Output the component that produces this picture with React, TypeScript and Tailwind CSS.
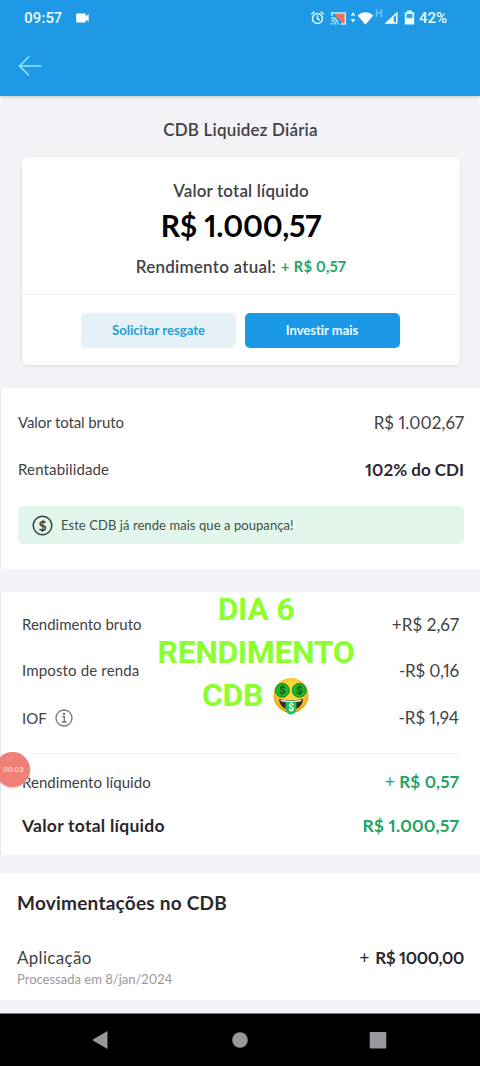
import React from "react";

function StatusIcons() {
  return (
    <svg width="110" height="20" viewBox="0 0 110 20" fill="none" className="block">
      {/* alarm */}
      <g stroke="#d9fbff" strokeWidth="1.5">
        <circle cx="7.5" cy="10.5" r="5" />
        <path d="M7.5 7.3v3.4l2.3 1.5M1.3 6.3l3-2.6M13.7 6.3l-3-2.6" />
      </g>
      {/* cast */}
      <path d="M25.5 6H35v9.5h-3.8c0-3.4-2.5-5.8-5.9-6z" fill="#f0705c" />
      <g stroke="#b9f3ff" strokeWidth="1.4">
        <path d="M21.7 8V5h13.6v11h-4.6" />
        <path d="M21.3 9.7c3.7 0 6.7 2.8 6.7 6.7M21.3 12.4c2.2 0 4 1.7 4 4" />
      </g>
      <circle cx="21.9" cy="15.7" r="1" fill="#b9f3ff" />
      {/* traffic arrows */}
      <path d="M43 4l2.3 3.8h-4.6zM43 14.8l2.3-3.8h-4.6z" fill="#d9fbff" />
      {/* wifi */}
      <path d="M47.7 7.5C50 5.2 52.7 4.2 55.4 4.2s5.5 1 7.8 3.3l-7.8 9.3z" fill="#fff" />
      {/* signal */}
      <path d="M74.5 15.7L87.5 3.5v12.2z" fill="#fff" />
      <path d="M83.7 9l2.3-2.1v7.3h-2.3z" fill="#1f98e4" />
      {/* battery */}
      <path d="M97 2.5h5v1.7h2.2v12.3h-9.400V4.200H97z" fill="#e9fdff" />
      <path d="M96.500 5.900h6v4.300h-6z" fill="#3aa7ea" />
    </svg>
  );
}

function MoneyFace() {
  return (
    <svg width="38" height="38" viewBox="0 0 38 38" className="block">
      <defs>
        <radialGradient id="face" cx="50%" cy="40%" r="58%">
          <stop offset="0.5" stopColor="#fdd835" />
          <stop offset="1" stopColor="#f0a41f" />
        </radialGradient>
      </defs>
      <circle cx="19" cy="18.5" r="17.5" fill="url(#face)" />
      <path d="M7 22q12 2.500 24 0c-.5 7-5.500 10.800-12 10.800S7.500 29 7 22z" fill="#3a2d2b" />
      <path d="M8.500 22.700q10.500 2 21 0l-.5 1.600q-10 2-20 0z" fill="#fff" />
      <path d="M13.600 24.700h10.800v7.300a5.400 5.400 0 0 1-10.800 0z" fill="#19c455" />
      <circle cx="10.300" cy="13.300" r="7" fill="#22b32d" stroke="#128a1e" strokeWidth="1" />
      <circle cx="27.300" cy="13.300" r="7" fill="#22b32d" stroke="#128a1e" strokeWidth="1" />
      <g fontFamily="Roboto, sans-serif" fontWeight="700" textAnchor="middle">
        <text x="10.300" y="17.300" fontSize="11" fill="#0b5715">$</text>
        <text x="27.300" y="17.300" fontSize="11" fill="#0b5715">$</text>
        <text x="19" y="34" fontSize="10" fill="#fff">$</text>
      </g>
    </svg>
  );
}

export default function App() {
  return (
    <div className="relative flex h-[1066px] w-[480px] flex-col overflow-hidden bg-[#f3f2f6] font-['Lato',sans-serif] whitespace-nowrap text-[#424146] proportional-nums [font-variant-ligatures:none]">
      <header className="h-24 shrink-0 bg-[#1f99e6] shadow-[0_1px_3px_#c9c5b8]">
        <div className="flex h-9 items-center pl-6 font-['Roboto',sans-serif] text-[15px] font-medium text-[#e9fdff]">
          <span className="mt-px w-[39px]">09:57</span>
          <svg width="13" height="10" viewBox="0 0 13 10" className="ml-[13px]">
            <path d="M1 .5h8q.8 0 .8.8V3.500L12.700 1v8L9.800 6.500v2.200q0 .8-.8.8H1q-.8 0-.8-.8V1.300Q.2.500 1 .5z" fill="#fff" />
          </svg>
          <div className="relative ml-[221px]">
            <StatusIcons />
            <span className="absolute -top-px left-[65px] text-[11px] leading-[14px] text-[#70cdfb]">H</span>
          </div>
          <span className="-ml-px mt-px">42%</span>
        </div>
        <div className="flex h-[60px] items-center pl-[18px]">
          <svg width="25" height="22" viewBox="0 0 25 22" fill="none" stroke="#8fe9ff" strokeWidth="1.6">
            <path d="M23.500 11H1.800M11 1.500L1.500 11l9.500 9.500" />
          </svg>
        </div>
      </header>

      <h1 className="mt-[22px] h-6 shrink-0 pl-px text-center text-[17px] leading-6 font-semibold tracking-[0.18px]">CDB Liquidez Diária</h1>

      <section className="mt-[15px] mr-5 ml-[22px] flex h-[208px] shrink-0 flex-col rounded-[5px] bg-white shadow-[0_1px_3px_#dddbe1]">
        <div className="flex h-[138px] flex-col items-center border-b border-[#f3f2f5] pt-[22px]">
          <p className="h-6 text-[17px] leading-6 font-semibold tracking-[0.15px]">Valor total líquido</p>
          <p className="h-[46px] text-[30px] leading-[45px] font-bold tracking-[-0.2px] text-black">R$ 1.000,57</p>
          <p className="mt-1.5 flex h-6 items-center text-[17px] font-semibold tracking-[0.23px]">
            Rendimento atual:<span className="ml-[5px] text-[14.5px] font-bold tracking-[0.35px] text-[#21a365]">+ R$ 0,57</span>
          </p>
        </div>
        <div className="mt-[18px] mr-0.5 flex justify-center gap-[9px] text-[13px] font-bold">
          <button className="h-[35px] w-[155px] rounded-[5px] bg-[#e6f1f8] pl-px tracking-[0.05px] text-[#20a3db]">Solicitar resgate</button>
          <button className="h-[35px] w-[155px] rounded-[5px] bg-[#1b99e6] text-[#e9fdff]">Investir mais</button>
        </div>
      </section>

      <section className="mt-[23px] h-[181px] shrink-0 border-l border-[#e6e5e9] bg-white pt-[11px] pr-4 pl-[17px]">
        <div className="flex h-[47px] items-center justify-between">
          <span className="text-[15px] tracking-[-0.1px]">Valor total bruto</span>
          <span className="text-[17px] tracking-[0.08px]">R$ 1.002,67</span>
        </div>
        <div className="flex h-[47px] items-center justify-between">
          <span className="text-[15px] tracking-[0.15px]">Rentabilidade</span>
          <span className="text-[17px] font-bold text-[#2b2a2e]">102% do CDI</span>
        </div>
        <div className="mt-[13px] flex h-[38px] items-center rounded-[5px] bg-[#e3f6ec] text-[13px] text-[#3c5147]">
          <svg width="21" height="21" viewBox="0 0 21 21" className="ml-[14px]">
            <circle cx="10.500" cy="10.500" r="9.300" fill="none" stroke="#33413a" strokeWidth="1.5" />
            <text x="10.500" y="15.500" textAnchor="middle" fontSize="14" fontWeight="700" fill="#33413a">$</text>
          </svg>
          <span className="mt-px ml-2 tracking-[0.07px]">Este CDB já rende mais que a poupança!</span>
        </div>
      </section>

      <section className="relative mt-[23px] h-[263px] shrink-0 border-l border-[#e6e5e9] bg-white pt-[9px] pr-[21px] pl-[21px]">
        <div className="flex h-[46px] items-center justify-between">
          <span className="text-[15px]">Rendimento bruto</span>
          <span className="mt-0.5 text-[17px] tracking-[0.1px]">+R$ 2,67</span>
        </div>
        <div className="flex h-[46px] items-center justify-between">
          <span className="text-[15px] tracking-[0.15px]">Imposto de renda</span>
          <span className="mt-0.5 text-[17px] tracking-[-0.15px]">-R$ 0,16</span>
        </div>
        <div className="flex h-[50px] items-center justify-between">
          <span className="flex items-center text-[15px]">
            IOF
            <svg width="18" height="18" viewBox="0 0 18 18" className="ml-[8px]" fill="none" stroke="#747378" strokeWidth="1.3">
              <circle cx="9" cy="9" r="8" />
              <path d="M7 7.700h2.300v5M6.700 13h5" />
              <circle cx="9" cy="5" r=".6" fill="#747378" />
            </svg>
          </span>
          <span className="text-[17px]">-R$ 1,94</span>
        </div>
        <div className="mt-[10px] ml-[10px] h-px bg-[#ececef]" />
        <div className="mt-[6px] flex h-[44px] items-center justify-between">
          <span className="text-[15px] tracking-[0.05px]">Rendimento líquido</span>
          <span className="text-[17px] font-bold tracking-[0.15px] text-[#21a365]"><span className="font-normal">+</span> R$ 0,57</span>
        </div>
        <div className="flex h-[44px] items-center justify-between font-bold">
          <span className="text-[17.5px] tracking-[0.26px] text-[#29282c]">Valor total líquido</span>
          <span className="text-[17.5px] tracking-[0.15px] text-[#21a365]">R$ 1.000,57</span>
        </div>
        <div className="absolute top-[-4px] left-[155px] flex w-[200px] flex-col items-center font-['Roboto',sans-serif] text-[32px] leading-[43.5px] font-bold tracking-[-0.4px] text-[#8cff2e]">
          <span>DIA 6</span>
          <span className="-mt-px">RENDIMENTO</span>
          <span className="flex items-center gap-[9px]">CDB <MoneyFace /></span>
        </div>
        <div className="absolute top-[160px] left-[-6px] flex size-[35px] items-center justify-center rounded-full bg-[#f08077] pl-0.5 font-['Roboto',sans-serif] text-[8px] text-[#ffe7dc] shadow-[0_1px_2px_#c9c9c9]">
          00:03
        </div>
      </section>

      <section className="mt-[18px] h-[127px] shrink-0 bg-white pt-[17px] pr-4 pl-[17px]">
        <h2 className="h-[26px] text-[19px] leading-[26px] font-bold tracking-[0.23px] text-[#29282c]">Movimentações no CDB</h2>
        <div className="mt-[30px] flex h-6 items-center justify-between text-[17px]">
          <span className="tracking-[0.3px]">Aplicação</span>
          <span className="flex items-center font-bold tracking-[-0.35px] text-[#29282c]"><span className="mr-1.5 font-normal">+</span>R$ 1000,00</span>
        </div>
        <p className="h-[18px] text-[13px] leading-[18px] text-[#99989d]">Processada em 8/jan/2024</p>
      </section>

      <nav className="mt-[13px] h-[53px] shrink-0 border-t border-[#777] bg-black">
        <svg width="480" height="52" viewBox="0 0 480 52" fill="#99979b">
          <path d="M92 26L107.500 17v18z" />
          <circle cx="240" cy="26" r="7.800" />
          <rect x="369.700" y="18" width="16.600" height="16.600" rx="1" />
        </svg>
      </nav>
    </div>
  );
}
